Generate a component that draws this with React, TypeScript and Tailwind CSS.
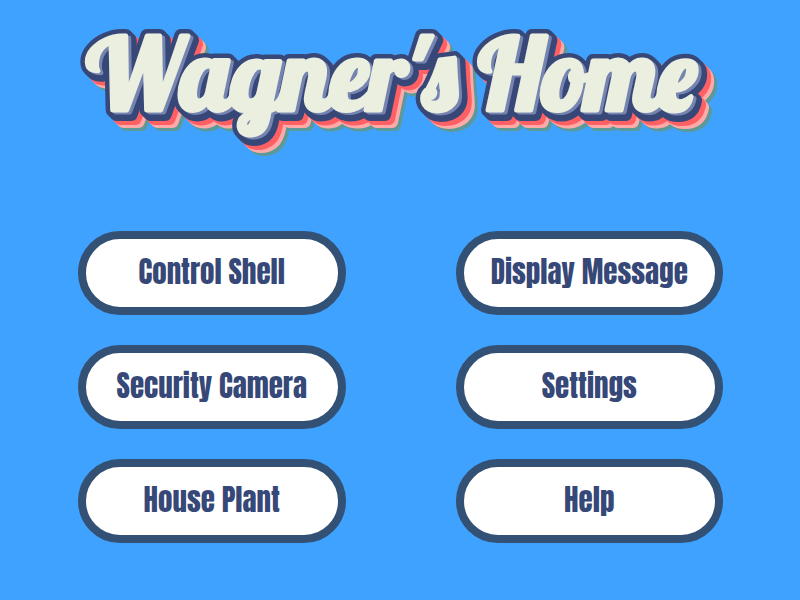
const ACTIONS = [
  "Control Shell",
  "Display Message",
  "Security Camera",
  "Settings",
  "House Plant",
  "Help",
];

// Extruded bands behind the lettering, drawn from the farthest to the nearest.
const BANDS = [
  { color: "#5b9a98", offsets: [14, 12] },
  { color: "#ffaaa8", offsets: [11, 9] },
  { color: "#ff6064", offsets: [8, 6] },
  { color: "#374878", offsets: [4, 2, 0] },
];

function Title() {
  return (
    <h1 className="-mx-8">
      <svg viewBox="0 0 708 136" className="block w-full overflow-visible">
        <defs>
          <text
            id="lettering"
            x="345"
            y="82"
            textAnchor="middle"
            className="font-['Lobster','Pacifico',cursive] text-[98px]"
          >
            Wagner's Home
          </text>
        </defs>
        <g strokeLinejoin="round" strokeLinecap="round">
          {BANDS.map(({ color, offsets }) =>
            offsets.map((d) => (
              <use
                key={`${color}-${d}`}
                href="#lettering"
                x={d}
                y={d}
                fill={color}
                stroke={color}
                strokeWidth="14"
              />
            )),
          )}
          <use href="#lettering" x="3" y="2" fill="#7584b0" stroke="#7584b0" strokeWidth="5" />
          <use href="#lettering" fill="#ebefdf" stroke="#ebefdf" strokeWidth="5" />
        </g>
      </svg>
    </h1>
  );
}

function MenuButton({ label }: { label: string }) {
  return (
    <button
      type="button"
      className="flex h-[84px] w-full cursor-pointer items-center justify-center rounded-full border-8 border-[#335075] bg-white pb-0.5 font-['Anton','Impact','Liberation_Sans',sans-serif] text-[29px] leading-none font-normal whitespace-nowrap text-[#364878]"
    >
      {label}
    </button>
  );
}

export default function App() {
  return (
    <main className="min-h-screen bg-[#3fa2ff] pt-7 pr-[77px] pb-14 pl-[78px]">
      <header>
        <Title />
      </header>
      <nav
        aria-label="Home menu"
        className="mt-[67px] grid grid-cols-2 gap-x-[110px] gap-y-[30px]"
      >
        {ACTIONS.map((label) => (
          <MenuButton key={label} label={label} />
        ))}
      </nav>
    </main>
  );
}
